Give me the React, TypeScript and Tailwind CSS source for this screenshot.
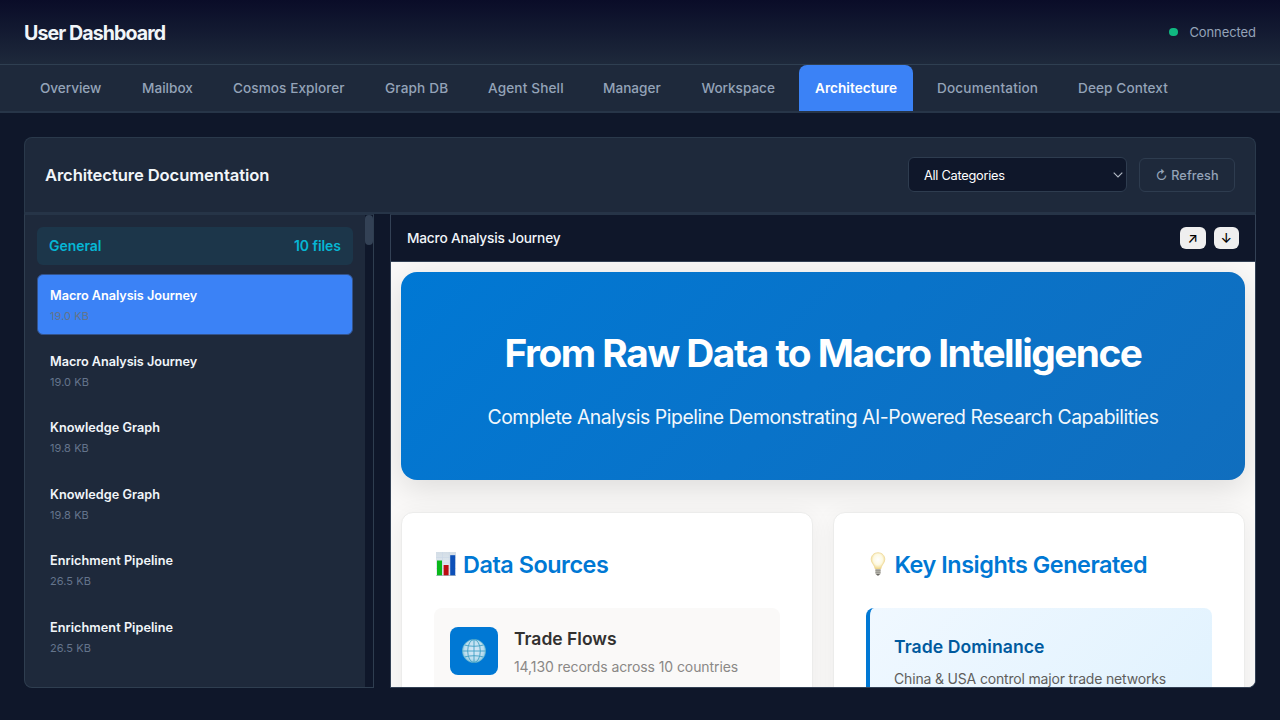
type Tab = { label: string; className: string; active?: boolean };

const tabs: Tab[] = [
  { label: 'Overview', className: 'w-[94px] tracking-[-0.05px]' },
  { label: 'Mailbox', className: 'w-[83px]' },
  { label: 'Cosmos Explorer', className: 'w-[144px] tracking-[0.06px]' },
  { label: 'Graph DB', className: 'w-[95px] tracking-[0.15px]' },
  { label: 'Agent Shell', className: 'w-[107px] tracking-[0.14px]' },
  { label: 'Manager', className: 'w-[90.5px]' },
  { label: 'Workspace', className: 'w-[105.5px] tracking-[-0.03px]' },
  { label: 'Architecture', className: 'w-[114px] tracking-[0.03px]', active: true },
  { label: 'Documentation', className: 'w-[133px] tracking-[0.16px]' },
  { label: 'Deep Context', className: 'w-[122px] tracking-[0.1px]' },
];

const files = [
  { name: 'Macro Analysis Journey', size: '19.0 KB', active: true, tracking: 'tracking-[-0.05px]' },
  { name: 'Macro Analysis Journey', size: '19.0 KB', active: false, tracking: 'tracking-[-0.05px]' },
  { name: 'Knowledge Graph', size: '19.8 KB', active: false, tracking: 'tracking-[0.02px]' },
  { name: 'Knowledge Graph', size: '19.8 KB', active: false, tracking: 'tracking-[0.02px]' },
  { name: 'Enrichment Pipeline', size: '26.5 KB', active: false, tracking: 'tracking-[0.04px]' },
  { name: 'Enrichment Pipeline', size: '26.5 KB', active: false, tracking: 'tracking-[0.04px]' },
];

function ChartIcon() {
  return (
    <svg width="20" height="24" viewBox="0 0 20 24" className="mb-0.5 shrink-0">
      <defs>
        <linearGradient id="paper" x1="0" y1="0" x2="0" y2="1">
          <stop offset="0" stopColor="#d3dde6" />
          <stop offset="1" stopColor="#eaf0f6" />
        </linearGradient>
      </defs>
      <rect width="20" height="24" fill="url(#paper)" />
      <path d="M0 5.5H20M0 11H20M0 16.5H20M6.5 0V24M13.3 0V24" stroke="#c9d7e6" strokeWidth="0.6" />
      <rect x="1" y="8.5" width="5" height="15" fill="#0ab81a" />
      <rect x="7.6" y="13" width="5" height="10.5" fill="#bd0d12" />
      <rect x="14.2" y="3.2" width="5" height="20.3" fill="#0d50b8" />
      <path d="M0 23.7H20" stroke="#8b9aa8" strokeWidth="0.6" />
    </svg>
  );
}

function BulbIcon() {
  return (
    <svg width="16" height="24" viewBox="0 0 16 24" className="mb-0.5 shrink-0">
      <defs>
        <radialGradient id="glow" cx="0.5" cy="0.42" r="0.6">
          <stop offset="0" stopColor="#ffffff" />
          <stop offset="0.55" stopColor="#fdf9e2" />
          <stop offset="1" stopColor="#efd37c" />
        </radialGradient>
      </defs>
      <path
        d="M8 .7C3.9.7 1.2 3.6 1.2 7.4c0 3.7 3.3 5 4 9.6h5.6c.7-4.6 4-5.9 4-9.6C14.8 3.6 12.1.7 8 .7Z"
        fill="url(#glow)"
        stroke="#ecd692"
        strokeWidth="0.7"
      />
      <path d="M5.4 17h5.2v4.3c0 1-1 2-2.6 2s-2.6-1-2.6-2Z" fill="#b5b3aa" />
      <path d="M5.4 18.6h5.2M5.4 20.4h5.2" stroke="#85837c" strokeWidth="0.6" />
      <path d="M6.3 22.2h3.4c-.4.8-.9 1.2-1.7 1.2s-1.3-.4-1.7-1.2Z" fill="#4f4e4a" />
    </svg>
  );
}

function GlobeIcon() {
  return (
    <svg width="24" height="24" viewBox="0 0 24 24">
      <defs>
        <radialGradient id="sea" cx="0.5" cy="0.45" r="0.55">
          <stop offset="0" stopColor="#d8e9f8" />
          <stop offset="0.7" stopColor="#bfdff0" />
          <stop offset="1" stopColor="#8cc8de" />
        </radialGradient>
      </defs>
      <circle cx="12" cy="12" r="11.6" fill="url(#sea)" stroke="#5bb2cf" strokeWidth="0.7" />
      <g fill="none" stroke="#3f9fc4" strokeWidth="0.9">
        <path d="M12 .5v23M.5 12h23M2.6 6c5 1.7 13.8 1.7 18.8 0M2.6 18c5-1.7 13.8-1.7 18.8 0" />
        <ellipse cx="12" cy="12" rx="6.3" ry="11.5" />
      </g>
    </svg>
  );
}

function FileItem({ file }: { file: (typeof files)[number] }) {
  return (
    <li
      className={`h-[60.5px] shrink-0 rounded-md border px-3 pt-[11.6px] ${
        file.active ? 'border-[#33538c] bg-[#3b82f6]' : 'border-transparent'
      }`}
    >
      <div
        className={`text-[12.7px] leading-[18px] font-semibold ${file.tracking} ${
          file.active ? 'text-white' : 'text-slate-100'
        }`}
      >
        {file.name}
      </div>
      <div className="mt-[3px] text-[11px] leading-[16px] tracking-[0.06px] text-[#64748b]">{file.size}</div>
    </li>
  );
}

export default function App() {
  return (
    <div className="flex h-[720px] w-[1280px] flex-col overflow-hidden bg-[#0f172a] font-['Inter',sans-serif] text-slate-100">
      <header className="flex h-[65px] shrink-0 items-center justify-between border-b border-[#2f3f51] bg-linear-to-b from-[#0a0c28] to-[#1e293b] px-6">
        <h1 className="pt-[3px] text-[19.6px] font-bold tracking-[-0.92px]">User Dashboard</h1>
        <div className="flex items-center gap-[11.5px] text-[13px] tracking-[-0.08px] text-[#94a3b8]">
          <span className="size-[8.5px] rounded-full bg-[#10b981]" />
          <span className="pt-0.5">Connected</span>
        </div>
      </header>

      <nav className="flex h-12 shrink-0 gap-2 border-b-2 border-[#273548] bg-[#1e293b] px-6">
        {tabs.map((tab) => (
          <button
            key={tab.label}
            className={`h-[46px] shrink-0 rounded-t-lg pt-px pl-4 text-left text-[13.6px] whitespace-nowrap ${tab.className} ${
              tab.active ? 'bg-[#3b82f6] font-semibold text-white' : 'font-medium text-[#94a3b8]'
            }`}
          >
            {tab.label}
          </button>
        ))}
      </nav>

      <main className="flex min-h-0 flex-1 flex-col px-6 pt-[23.5px] pb-8">
        <section className="flex h-[77px] shrink-0 items-center justify-between rounded-t-lg border border-b-2 border-[#2a394b] border-b-[#263447] bg-[#1e293b] px-5">
          <h2 className="pt-px text-[16.6px] font-semibold tracking-[-0.09px]">Architecture Documentation</h2>
          <div className="flex items-center gap-3">
            <button className="flex h-[35px] w-[219.5px] items-center justify-between rounded-md border border-[#2e3c4f] bg-[#0f172a] pr-[3px] pl-[15.5px] text-[12.8px] tracking-[-0.28px] text-white">
              <span className="pt-[2.5px]">All Categories</span>
              <svg width="10" height="6" viewBox="0 0 10 6" fill="none" stroke="#b3bac5" strokeWidth="1.1">
                <path d="M.7.7 5 5 9.3.7" />
              </svg>
            </button>
            <button className="h-[34px] w-[96px] rounded-md border border-[#2e3c4f] pt-[2.5px] pl-[15.5px] text-left text-[12.7px] font-medium tracking-[0.1px] whitespace-nowrap text-[#94a3b8]">
              ↻ Refresh
            </button>
          </div>
        </section>

        <div className="flex min-h-0 flex-1 gap-4">
          <aside className="flex w-[350px] shrink-0 overflow-hidden rounded-bl-lg border border-[#2f3e50] border-t-[#263447] bg-[#1e293b]">
            <div className="min-w-0 flex-1 px-3 pt-[12.5px]">
              <div className="flex h-[38px] items-center justify-between rounded-md bg-[#1c364a] px-3 pb-px text-[14px] font-semibold tracking-[-0.05px] text-[#06b6d4]">
                <span>General</span>
                <span>10 files</span>
              </div>
              <ul className="mt-[9px] flex flex-col gap-[5.9px]">
                {files.map((file, i) => (
                  <FileItem key={i} file={file} />
                ))}
              </ul>
            </div>
            <div className="w-2 shrink-0 bg-[#0f172a]">
              <div className="h-[30.5px] rounded bg-[#334155]" />
            </div>
          </aside>

          <article className="flex min-w-0 flex-1 flex-col overflow-hidden rounded-br-lg border border-[#334155] border-t-[#263447] bg-[#faf9f8]">
            <div className="flex h-[47.5px] shrink-0 items-center justify-between border-b border-[#334155] bg-[#0f172a] px-4">
              <h3 className="pt-[1.5px] text-[13.7px] font-medium tracking-[-0.2px]">Macro Analysis Journey</h3>
              <div className="flex gap-2 text-[13.4px] leading-[22px] font-medium text-black">
                <button className="h-[22px] w-[25.5px] rounded-md bg-[#efefef]">↗</button>
                <button className="h-[22px] w-[25.5px] rounded-md bg-[#efefef]">↓</button>
              </div>
            </div>

            <div className="min-h-0 flex-1 overflow-hidden bg-[#faf9f8] p-[10px]">
              <div className="flex h-[208px] flex-col items-center rounded-2xl bg-linear-135 from-[#0078d4] to-[#106ebe] pt-[56px] text-white shadow-[0_8px_32px_rgba(0,0,0,0.12)]">
                <div className="text-[38.8px] leading-[50px] font-bold tracking-[-1.5px] whitespace-nowrap">
                  From Raw Data to Macro Intelligence
                </div>
                <p className="mt-[24px] text-[19.4px] leading-[30px] tracking-[-0.46px] whitespace-nowrap opacity-95">
                  Complete Analysis Pipeline Demonstrating AI-Powered Research Capabilities
                </p>
              </div>

              <div className="mt-[32px] grid grid-cols-2 gap-5">
                <div className="h-[400px] rounded-xl border border-[#ececeb] bg-white px-8 pt-[31.5px] shadow-[0_4px_24px_rgba(0,0,0,0.06)]">
                  <div className="flex h-[40px] items-center gap-[7px] pl-[2px] text-[23.4px] font-semibold tracking-[-0.46px] text-[#0078d4]">
                    <ChartIcon />
                    <h4 className="pt-px whitespace-nowrap">Data Sources</h4>
                  </div>
                  <div className="mt-[23px] flex h-[90px] gap-4 rounded-lg bg-[#faf9f8] px-4 pt-[19px]">
                    <div className="flex size-12 shrink-0 items-center justify-center rounded-lg bg-[#0078d4]">
                      <GlobeIcon />
                    </div>
                    <div>
                      <div className="text-[17.5px] leading-[24px] font-semibold text-[#323130]">
                        Trade Flows
                      </div>
                      <div className="mt-[6px] text-[14px] leading-[20px] tracking-[-0.09px] text-[#8a8886]">
                        14,130 records across 10 countries
                      </div>
                    </div>
                  </div>
                </div>

                <div className="h-[400px] rounded-xl border border-[#ececeb] bg-white px-8 pt-[31.5px] shadow-[0_4px_24px_rgba(0,0,0,0.06)]">
                  <div className="flex h-[40px] items-center gap-[8.5px] pl-[4px] text-[23.4px] font-semibold tracking-[-0.45px] text-[#0078d4]">
                    <BulbIcon />
                    <h4 className="pt-px whitespace-nowrap">Key Insights Generated</h4>
                  </div>
                  <div className="mt-[23px] h-[120px] rounded-lg border-l-4 border-[#0078d4] bg-linear-135 from-[#f0f8ff] to-[#e0f2fe] px-6 pt-[27px]">
                    <div className="text-[17.6px] leading-[24px] font-semibold tracking-[0.07px] text-[#005a9e]">
                      Trade Dominance
                    </div>
                    <div className="mt-[10px] text-[14px] leading-[20px] tracking-[-0.17px] whitespace-nowrap text-[#605e5c]">
                      China &amp; USA control major trade networks
                    </div>
                  </div>
                </div>
              </div>
            </div>
          </article>
        </div>
      </main>
    </div>
  );
}
